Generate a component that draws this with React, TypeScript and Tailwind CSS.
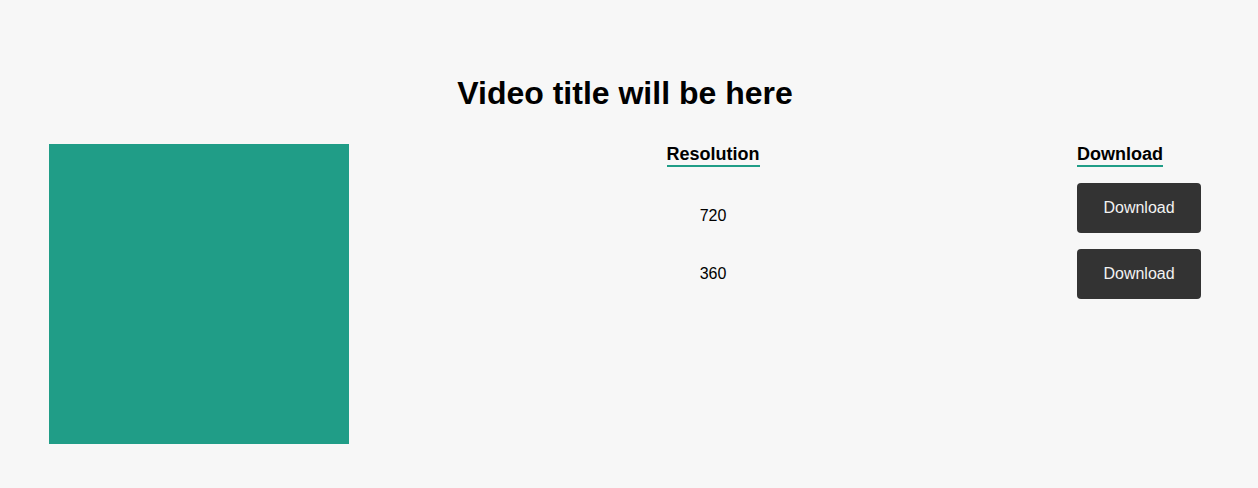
export default function App() {
  const rows = ["720", "360"]

  return (
    <div className="min-h-[488px] bg-[#f7f7f7] font-['Liberation_Sans',Arial,sans-serif] text-black">
      <div className="pl-[49px] pr-[57px] pt-[75px]">
        <h1 className="text-center text-[32px] font-bold leading-[37px]">Video title will be here</h1>

        <div className="mt-[32px] flex items-start justify-between">
          <div className="h-[300px] w-[300px] bg-[#209d87]" />

          <div className="flex flex-col items-center">
            <h2 className="border-b-2 border-[#209d87] text-[18px] font-bold leading-[21px]">
              Resolution
            </h2>
            {rows.map((r, i) => (
              <div key={r} className={`text-[16px] leading-[18px] ${i === 0 ? "mt-[40px]" : "mt-[40px]"}`}>
                {r}
              </div>
            ))}
          </div>

          <div className="flex w-[124px] flex-col items-start">
            <h2 className="border-b-2 border-[#209d87] text-[18px] font-bold leading-[21px]">
              Download
            </h2>
            {rows.map((r, i) => (
              <button
                key={r}
                className={`h-[50px] w-[124px] rounded-[4px] bg-[#333333] text-[16px] text-[#f2f2f2] ${i === 0 ? "mt-[16px]" : "mt-[16px]"}`}
              >
                Download
              </button>
            ))}
          </div>
        </div>
      </div>
    </div>
  )
}
